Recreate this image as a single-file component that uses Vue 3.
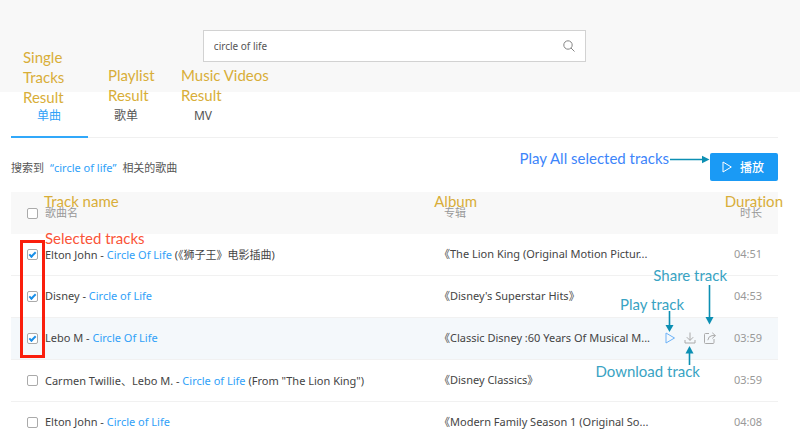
<script setup>
import { ref } from 'vue'

const query = ref('circle of life')
const tabs = ['单曲', '歌单', 'MV']
const tracks = ref([
  { artist: 'Elton John', title: 'Circle Of Life', extra: '(《狮子王》电影插曲)', album: '《The Lion King (Original Motion Pictur...', time: '04:51', checked: true },
  { artist: 'Disney', title: 'Circle of Life', extra: '', album: "《Disney's Superstar Hits》", time: '04:53', checked: true },
  { artist: 'Lebo M', title: 'Circle Of Life', extra: '', album: '《Classic Disney :60 Years Of Musical M...', time: '03:59', checked: true, active: true },
  { artist: 'Carmen Twillie、Lebo M.', title: 'Circle of Life', extra: '(From "The Lion King")', album: '《Disney Classics》', time: '03:59', checked: false },
  { artist: 'Elton John', title: 'Circle of Life', extra: '', album: '《Modern Family Season 1 (Original So...', time: '04:08', checked: false }
])
</script>

<template>
  <div class="page">
    <header class="top">
      <form class="search" role="search" @submit.prevent>
        <input v-model="query" type="text" aria-label="搜索" />
        <button type="submit" aria-label="搜索">
          <svg width="12" height="12" viewBox="0 0 12 12" fill="none" stroke="#858585">
            <circle cx="5" cy="5" r="4.2" />
            <path d="M8 8L11.5 11.5" />
          </svg>
        </button>
      </form>
    </header>

    <main class="content">
      <nav class="tabs">
        <a v-for="(tab, i) in tabs" :key="tab" href="#" :class="{ current: i === 0 }">{{ tab }}</a>
      </nav>

      <div class="summary">
        <p>搜索到<a href="#">“circle of life”</a>相关的歌曲</p>
        <button class="play-all" type="button">
          <svg width="10" height="12" viewBox="0 0 10 12" fill="none" stroke="#fff">
            <path d="M1 1V11L9.300 6Z" />
          </svg>
          播放
        </button>
      </div>

      <table class="tracks">
        <thead>
          <tr>
            <th class="c-check"><input type="checkbox" aria-label="全选" /></th>
            <th class="c-name">歌曲名</th>
            <th class="c-album">专辑</th>
            <th class="c-actions"></th>
            <th class="c-time">时长</th>
          </tr>
        </thead>
        <tbody>
          <tr v-for="(t, i) in tracks" :key="i" :class="{ active: t.active }">
            <td class="c-check"><input v-model="t.checked" type="checkbox" :aria-label="t.title" /></td>
            <td class="c-name">{{ t.artist }} - <a href="#">{{ t.title }}</a> {{ t.extra }}</td>
            <td class="c-album">{{ t.album }}</td>
            <td class="c-actions">
              <div v-if="t.active" class="actions">
                <button type="button" aria-label="播放">
                  <svg width="12" height="12" viewBox="0 0 12 12" fill="none" stroke="#6cb2f8">
                    <path d="M2 1V11L10.500 6Z" />
                  </svg>
                </button>
                <button type="button" aria-label="下载">
                  <svg width="12" height="12" viewBox="0 0 12 12" fill="none" stroke="#aaa">
                    <path d="M6 0.500V8.300M2.800 5.200L6 8.400L9.200 5.200M1 8V11H11V8" />
                  </svg>
                </button>
                <button type="button" aria-label="分享">
                  <svg width="12" height="12" viewBox="0 0 12 12" fill="none" stroke="#aaa">
                    <path d="M5 1.500H1.500Q0.500 1.500 0.500 2.500V10.500Q0.500 11.500 1.500 11.500H9Q10 11.500 10 10.500V7M8.300 0.800L11.400 3.600L8.300 6.400M11.400 3.600H8Q4.500 4 3.800 8.200" />
                  </svg>
                </button>
              </div>
            </td>
            <td class="c-time">{{ t.time }}</td>
          </tr>
        </tbody>
      </table>
    </main>

    <div class="note gold n-single">Single<br />Tracks<br />Result</div>
    <div class="note gold n-playlist">Playlist<br />Result</div>
    <div class="note gold n-videos">Music Videos<br />Result</div>
    <div class="note gold n-name">Track name</div>
    <div class="note gold n-album">Album</div>
    <div class="note gold n-duration">Duration</div>
    <div class="note red n-selected">Selected tracks</div>
    <div class="note blue n-all">Play All selected tracks</div>
    <div class="note teal n-share">Share track</div>
    <div class="note teal n-play">Play track</div>
    <div class="note teal n-download">Download track</div>
    <div class="frame"></div>
    <svg class="arrows" width="140" height="240" viewBox="660 140 140 240" stroke="#0c8fb3" stroke-width="1.6" fill="none">
      <path d="M670 159.500H703M709.500 285V318M669.500 311V326M689.500 365V353" />
      <g fill="#0c8fb3" stroke="none">
        <path d="M709.500 159.500L702 155.800V163.200Z" />
        <path d="M709.500 324.500L705.500 317H713.500Z" />
        <path d="M669.500 332L665.500 325H673.500Z" />
        <path d="M689.500 346L685.500 353.500H693.500Z" />
      </g>
    </svg>
  </div>
</template>

<style>
body {
  margin: 0;
  background: #fff;
}
</style>

<style scoped>
.page {
  position: relative;
  height: 100vh;
  overflow: hidden;
  font-family: "Noto Sans", "Noto Sans CJK SC", sans-serif;
  font-size: 11px;
  color: #444;
}
a {
  color: #31a1f8;
  text-decoration: none;
}
button {
  font: inherit;
  border: 0;
  padding: 0;
  background: none;
  cursor: pointer;
}
svg {
  display: block;
}
.top {
  display: grid;
  grid-template-columns: 53fr 100fr 56fr;
  box-sizing: border-box;
  height: 92px;
  padding-top: 30px;
  background: #f8f8f8;
}
.search {
  grid-column: 2;
  box-sizing: border-box;
  display: flex;
  align-items: center;
  height: 32px;
  padding: 0 10px;
  border: 1px solid #d2d2d2;
  background: #fff;
}
.search input {
  flex: 1;
  min-width: 0;
  border: 0;
  padding: 0;
  outline: 0;
  font: inherit;
  font-size: 10px;
  color: #555;
  background: none;
}
.content {
  padding: 0 22px 0 11px;
}
.tabs {
  display: flex;
  height: 45px;
  border-bottom: 1px solid #f0f0f0;
}
.tabs a {
  box-sizing: border-box;
  width: 77px;
  height: 46px;
  padding-right: 1px;
  line-height: 48px;
  text-align: center;
  font-size: 12px;
  color: #555;
}
.tabs a.current {
  color: #31a1f8;
  border-bottom: 2px solid #31a8fa;
}
.summary {
  display: flex;
  align-items: center;
  justify-content: space-between;
  box-sizing: border-box;
  height: 54px;
  padding-top: 4px;
}
.summary p {
  margin: 0;
  color: #555;
}
.summary p a {
  margin: 0 6px;
}
.play-all {
  display: flex;
  align-items: center;
  justify-content: center;
  gap: 8px;
  width: 68px;
  height: 28px;
  padding-right: 2px;
  border-radius: 2px;
  background: #1a9af5;
  color: #fff;
  font-size: 12px;
  font-weight: 500;
}
.tracks {
  width: 100%;
  table-layout: fixed;
  border-collapse: separate;
  border-spacing: 0;
}
th,
td {
  box-sizing: border-box;
  height: 42px;
  padding: 0 0 2px;
  text-align: left;
  font-weight: 400;
  white-space: nowrap;
}
th {
  background: #f8f8f8;
  color: #999;
}
td {
  border-bottom: 1px solid #f1f1f1;
}
.active td {
  background: #f4f8fb;
}
.c-check {
  width: 34px;
  padding-bottom: 0;
}
.c-album {
  width: 220px;
}
td.c-album {
  padding-bottom: 4px;
}
th.c-album {
  padding-left: 5px;
}
.c-actions {
  width: 64px;
}
.c-time {
  width: 55px;
  padding-right: 16px;
  text-align: right;
  color: #999;
}
input[type="checkbox"] {
  appearance: none;
  box-sizing: border-box;
  display: block;
  width: 11px;
  height: 11px;
  margin: 0 0 0 16px;
  border: 1px solid #aaa;
  border-radius: 2px;
  background: #fff;
}
input[type="checkbox"]:checked::after {
  content: "";
  box-sizing: border-box;
  display: block;
  width: 7px;
  height: 4px;
  margin: 2px 0 0 1px;
  border: solid #1a8fe8;
  border-width: 0 0 2px 2px;
  transform: rotate(-45deg);
}
.actions {
  display: flex;
  gap: 8px;
  padding-left: 5px;
}
.note {
  position: absolute;
  font-family: Lato, sans-serif;
  font-size: 15px;
  line-height: 20px;
  font-variant-ligatures: none;
  white-space: nowrap;
}
.gold { color: #d8ae38; }
.red { color: #fa5438; }
.blue { color: #3d85fa; }
.teal { color: #39a3c3; }
.n-single { left: 23px; top: 47px; }
.n-playlist { left: 108px; top: 65px; }
.n-videos { left: 181px; top: 65px; }
.n-name { left: 44px; top: 191px; }
.n-album { right: 323px; top: 191px; }
.n-duration { right: 17px; top: 191px; }
.n-selected { left: 45px; top: 228px; }
.n-all { right: 131px; top: 148px; }
.n-share { right: 73px; top: 265px; }
.n-play { right: 116px; top: 294px; }
.n-download { right: 100px; top: 361px; }
.frame {
  position: absolute;
  box-sizing: border-box;
  left: 20px;
  top: 240px;
  width: 25px;
  height: 118px;
  border: 3px solid #fa1e0c;
}
.arrows {
  position: absolute;
  right: 0;
  top: 140px;
}
</style>
